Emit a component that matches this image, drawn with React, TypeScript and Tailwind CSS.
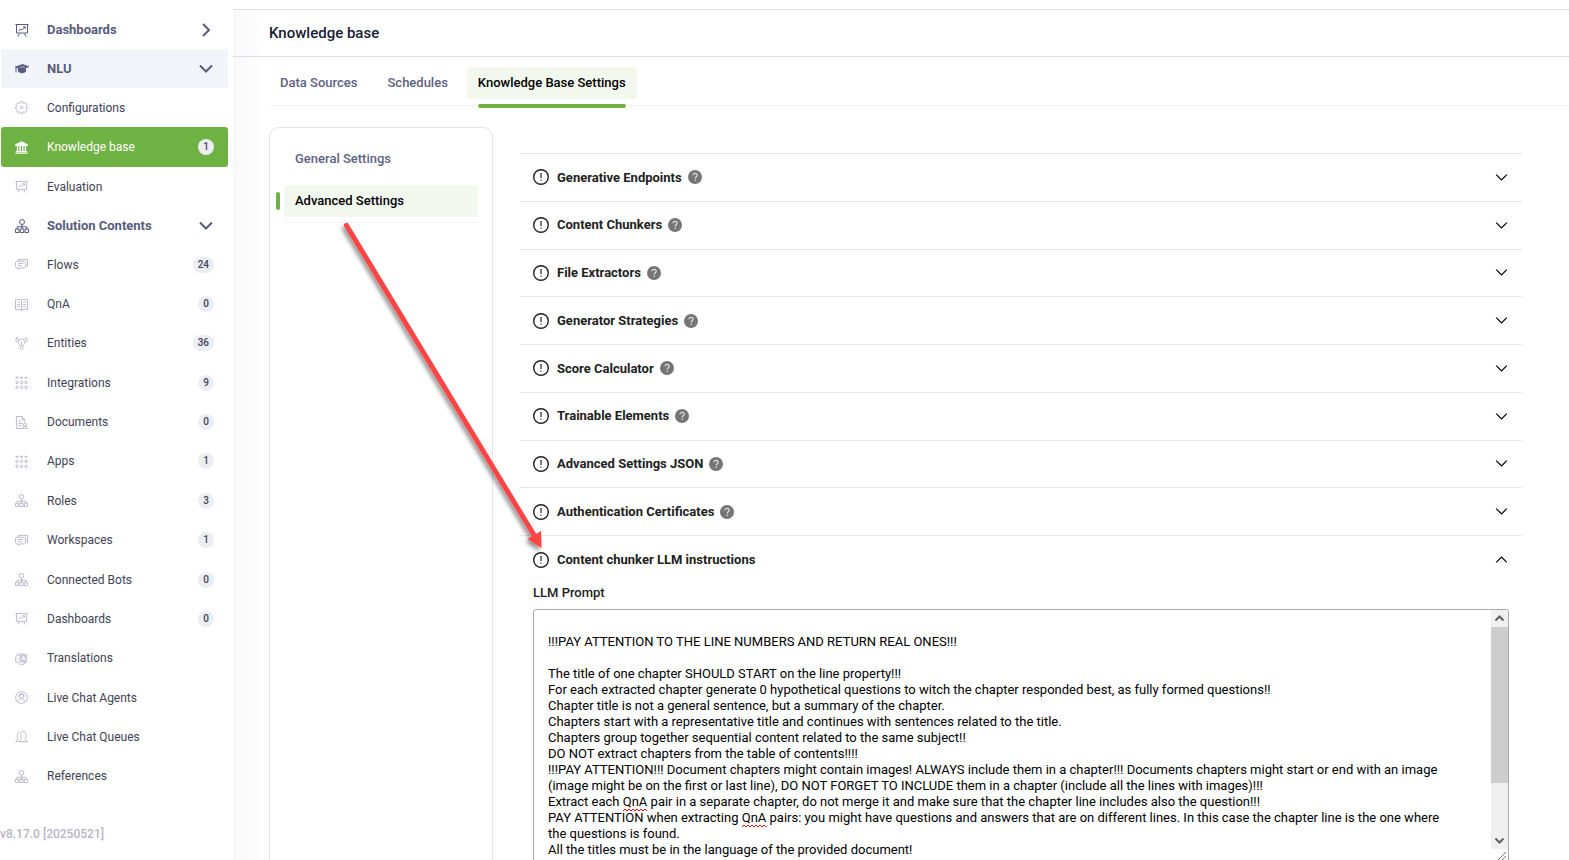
import React, { useState } from 'react';
import { BsChevronDown, BsChevronUp } from 'react-icons/bs';

type IconName = 'board' | 'cap' | 'gear' | 'bank' | 'tree' | 'chat' | 'book' | 'nodes' | 'dots' | 'doc' | 'lang' | 'agent' | 'queue';

interface NavItem {
   label: string;
   icon: IconName;
   count?: number;
}

const NLU_ITEMS: NavItem[] = [
   { label: 'Configurations', icon: 'gear' },
   { label: 'Knowledge base', icon: 'bank', count: 1 },
   { label: 'Evaluation', icon: 'board' },
];

const SOLUTION_ITEMS: NavItem[] = [
   { label: 'Flows', icon: 'chat', count: 24 },
   { label: 'QnA', icon: 'book', count: 0 },
   { label: 'Entities', icon: 'nodes', count: 36 },
   { label: 'Integrations', icon: 'dots', count: 9 },
   { label: 'Documents', icon: 'doc', count: 0 },
   { label: 'Apps', icon: 'dots', count: 1 },
   { label: 'Roles', icon: 'tree', count: 3 },
   { label: 'Workspaces', icon: 'chat', count: 1 },
   { label: 'Connected Bots', icon: 'tree', count: 0 },
   { label: 'Dashboards', icon: 'board', count: 0 },
   { label: 'Translations', icon: 'lang' },
   { label: 'Live Chat Agents', icon: 'agent' },
   { label: 'Live Chat Queues', icon: 'queue' },
   { label: 'References', icon: 'tree' },
];

const SECTIONS = [
   'Generative Endpoints',
   'Content Chunkers',
   'File Extractors',
   'Generator Strategies',
   'Score Calculator',
   'Trainable Elements',
   'Advanced Settings JSON',
   'Authentication Certificates',
];

const PROMPT = `
!!!PAY ATTENTION TO THE LINE NUMBERS AND RETURN REAL ONES!!!

The title of one chapter SHOULD START on the line property!!!
For each extracted chapter generate 0 hypothetical questions to witch the chapter responded best, as fully formed questions!!
Chapter title is not a general sentence, but a summary of the chapter.
Chapters start with a representative title and continues with sentences related to the title.
Chapters group together sequential content related to the same subject!!
DO NOT extract chapters from the table of contents!!!!
!!!PAY ATTENTION!!! Document chapters might contain images! ALWAYS include them in a chapter!!! Documents chapters might start or end with an image (image might be on the first or last line), DO NOT FORGET TO INCLUDE them in a chapter (include all the lines with images)!!!
Extract each QnA pair in a separate chapter, do not merge it and make sure that the chapter line includes also the question!!!
PAY ATTENTION when extracting QnA pairs: you might have questions and answers that are on different lines. In this case the chapter line is the one where the questions is found.
All the titles must be in the language of the provided document!`;

const SHAPES: Record<IconName, React.ReactNode> = {
   board: (
      <>
         <path d="M0.5 1.5h13M1.5 1.5v8.5h11v-8.5M4.5 10.5l-1.5 3M9.5 10.5l1.5 3" />
         <path d="M3.5 8l2-2 1.5 1 3-3M8 3.8h2.2V6" />
      </>
   ),
   cap: (
      <>
         <path d="M0.5 5L7.5 2.5 13.5 4.8 7 7.2z" fill="currentColor" />
         <path d="M3.5 6v3.5c2 1.8 5 1.8 7 0V6L7 7.5z" fill="currentColor" />
         <path d="M1 5v5.5" />
         <path d="M4.5 5.6c1.5-1.2 4.500-1 5.500 0.600" stroke="#f1f5f9" strokeWidth="0.6" />
      </>
   ),
   gear: (
      <>
         <circle cx="7" cy="7" r="1.3" />
         <path d="M5.8 0.7h2.4l0.400 1.700 1 0.400 1.500-0.900 1.700 1.700-0.900 1.500 0.400 1 1.200 0.300v1.400l-1.200 0.400-0.400 1 0.900 1.500-1.700 1.700-1.500-0.900-1 0.400-0.400 1.400H5.800l-0.400-1.400-1-0.400-1.500 0.900-1.700-1.700 0.900-1.500-0.400-1-1.200-0.400V6.400l1.200-0.300 0.400-1-0.900-1.500 1.700-1.700 1.500 0.900 1-0.400z" />
      </>
   ),
   bank: (
      <>
         <path d="M0.5 4L7 0.8 13.5 4v0.8h-13z" fill="currentColor" />
         <path d="M2.8 5.5v5.5M5.6 5.5v5.5M8.4 5.5v5.5M11.2 5.5v5.5" strokeWidth="1.5" />
         <path d="M1 11.5h12M0.3 13.2h13.4" strokeWidth="1.2" />
      </>
   ),
   tree: (
      <>
         <circle cx="7" cy="3" r="2.5" />
         <path d="M7 5.5v4.5M2.2 10V7.8h9.6V10M0.5 10h3.5v3.5H0.5zM5.2 10h3.6v3.5H5.2zM10 10h3.5v3.5H10z" />
      </>
   ),
   chat: (
      <>
         <path d="M3.5 3V1.5h10v7.2l-2 0.6" />
         <path d="M2.5 3.5h7.2c1 0 1.8 0.6 1.8 1.6v4c0 1-0.8 1.6-1.8 1.6H5.5L3.5 12.5v-1.8H2.3c-1 0-1.8-0.6-1.8-1.6v-4c0-1 0.8-1.6 2-1.6zM3.3 6h5.5M3.3 8.3h4" />
      </>
   ),
   book: (
      <>
         <path d="M7 2.5C5.5 1.3 2.8 1.3 0.5 1.7v10.8c2.5-0.4 5-0.3 6.5 0.8 1.5-1.1 4-1.2 6.5-0.8V1.7C11.2 1.3 8.5 1.3 7 2.5zM7 2.5v10.8" />
         <path d="M2.5 4.5h2.8M2.5 7h2.8M2.5 9.5h2.8M8.7 4.5h2.8M8.7 7h2.8M8.7 9.5h2.8" />
      </>
   ),
   nodes: (
      <>
         <circle cx="2.5" cy="3.5" r="1.7" />
         <circle cx="11.5" cy="3.5" r="1.7" />
         <circle cx="7" cy="11.5" r="1.8" />
         <path d="M4.5 3.5l1.5-1.3h2l1.5 1.3M3 5.5l2.5 4.3M11 5.5L8.5 9.8M7 5v4M0.8 1h2M11.2 1h2" />
      </>
   ),
   dots: (
      <>
         <path d="M0.5 1.5h3.2M5.4 1.5h3.2M10.3 1.5h3.2M2.1 0.8v2.7M7 0.8v2.7M11.9 0.8v2.7" />
         <circle cx="2.1" cy="7" r="1.3" />
         <circle cx="7" cy="7" r="1.3" />
         <circle cx="11.9" cy="7" r="1.3" />
         <circle cx="2.1" cy="12.2" r="1.3" />
         <circle cx="7" cy="12.2" r="1.3" />
         <circle cx="11.9" cy="12.2" r="1.3" />
      </>
   ),
   doc: (
      <>
         <path d="M10.5 6.5V4L7.5 0.5h-6v13h7M7.5 0.5V4h3M3.5 5.5h3M3.5 8h5M3.5 10.5h3.5" />
         <circle cx="10.7" cy="9.5" r="1.6" />
         <path d="M8 13.5c0-1.6 1-2.3 2.7-2.3s2.7 0.7 2.7 2.3z" />
      </>
   ),
   lang: (
      <>
         <path d="M5.5 1.8l7 1v8.7l-7-1z" fill="currentColor" opacity="0.75" />
         <path d="M4.5 1.2C2 2 0.8 4 0.8 6.5v4.3h4M3 4h2M3 7.5h2M4 12.5c2 1.3 5 1.2 7-0.5" />
         <path d="M7.3 8.8L9.2 4.5 11 9.300M8 7.500h2.4" stroke="#ffffff" />
      </>
   ),
   agent: (
      <>
         <circle cx="7" cy="7" r="6.3" />
         <circle cx="7" cy="5.5" r="2.3" />
         <path d="M3 11.5c0.5-2.2 2-3.2 4-3.2s3.5 1 4 3.2M3.8 6c0-4 6.4-4 6.4 0" />
      </>
   ),
   queue: (
      <>
         <path d="M0.5 12.5h13M5 12c0.3-1.5 2-1.5 2-3C5.5 7.5 5.5 1.5 9 1.5s3.5 6 1.8 7.5c0 1.5 2 1.5 2.5 3.3" />
         <path d="M1.2 12c0-1.8 2-1.5 2-3C1.7 7 2 2.2 5.2 2.2" />
      </>
   ),
};

const NavIcon: React.FC<{ name: IconName; className?: string }> = ({ name, className }) => (
   <svg viewBox="0 0 14 14" fill="none" stroke="currentColor" className={className} aria-hidden="true">
      {SHAPES[name]}
   </svg>
);

const GroupHeader: React.FC<{ label: string; icon: IconName; open?: boolean; tinted?: boolean }> = ({ label, icon, open, tinted }) => (
   <button
      className={`h-[39px] w-full flex items-center pl-[14px] pr-[15px] text-[13px] font-bold text-[#575b7d] cursor-pointer ${tinted ? 'bg-[#f1f5f9]' : ''}`}
   >
      <NavIcon name={icon} className="size-[14px] mr-[18px]" />
      <span className="flex-1 text-left">{label}</span>
      <svg viewBox="0 0 14 14" fill="none" stroke="currentColor" strokeWidth="2" className="size-[14px]" aria-hidden="true">
         {open ? <path d="M1 3.500l6 6 6-6" /> : <path d="M4 1l6 6-6 6" />}
      </svg>
   </button>
);

const NavLink: React.FC<{ item: NavItem; active?: boolean }> = ({ item, active }) => (
   <a
      href="#"
      className={`h-full flex items-center pl-[14px] pr-[14px] text-[12px] ${active ? 'bg-[#6fb244] text-white rounded-[3px]' : 'text-[#3f4254]'}`}
   >
      <NavIcon name={item.icon} className={`size-[13px] mr-[19px] ${active ? 'text-white' : 'text-[#b5b5c8]'}`} />
      <span className="flex-1">{item.label}</span>
      {item.count !== undefined && (
         <span className="h-4 min-w-4 px-[5px] rounded-full bg-[#ebedf3] text-[#3f4254] text-[10px] leading-4 font-medium text-center">
            {item.count}
         </span>
      )}
   </a>
);

const Sidebar: React.FC = () => (
   <aside className="w-[233px] shrink-0 pt-[10px] pl-px pr-[5px] bg-white">
      <nav>
         <GroupHeader label="Dashboards" icon="board" />
         <GroupHeader label="NLU" icon="cap" open tinted />
         <ul>
            {NLU_ITEMS.map((item) => {
               const active = item.label === 'Knowledge base';
               return (
                  <li key={item.label} className={active ? 'h-10' : 'h-[39px]'}>
                     <NavLink item={item} active={active} />
                  </li>
               );
            })}
         </ul>
         <GroupHeader label="Solution Contents" icon="tree" open />
         <ul className="grid auto-rows-fr h-[551px]">
            {SOLUTION_ITEMS.map((item) => (
               <li key={item.label}>
                  <NavLink item={item} />
               </li>
            ))}
         </ul>
      </nav>
      <p className="mt-7 -ml-px text-[12px] leading-5 font-medium text-[#b5b5c3]">v8.17.0 [20250521]</p>
   </aside>
);

const Tabs: React.FC = () => (
   <nav className="ml-9 mt-[10px] h-[39px] flex items-start gap-2 border-b border-[#f3f4f6] text-[13px] font-medium">
      <a href="#" className="h-8 px-[11px] flex items-center text-[#5e6282]">Data Sources</a>
      <a href="#" className="h-8 px-[11px] flex items-center text-[#5e6282]">Schedules</a>
      <a href="#" className="relative h-8 px-[11px] flex items-center rounded bg-[#f3f8ef] text-black">
         Knowledge Base Settings
         <span className="absolute left-[11px] right-[11px] top-[37px] h-1 rounded-sm bg-[#6fb244]" />
      </a>
   </nav>
);

const SettingsMenu: React.FC = () => (
   <div className="w-56 shrink-0 h-[860px] pt-[15px] px-[14px] border border-[#e1e3ee] rounded-[10px] text-[13px] font-medium">
      <a href="#" className="h-8 px-[11px] flex items-center text-[#5e6282]">General Settings</a>
      <div className="mt-[10px] pb-[5px] border-b border-[#f3f4f6]">
         <a href="#" className="relative h-8 px-[11px] flex items-center rounded bg-[#f3f8ef] text-black">
            Advanced Settings
            <span className="absolute -left-2 top-[7px] w-1 h-[18px] rounded-sm bg-[#6fb244]" />
         </a>
      </div>
   </div>
);

const AlertIcon: React.FC = () => (
   <svg viewBox="0 0 16 16" fill="none" stroke="currentColor" className="size-4" aria-hidden="true">
      <circle cx="8" cy="8" r="7.300" strokeWidth="1.400" />
      <path d="M8 4v5M8 10.500v1.300" strokeWidth="1.200" />
   </svg>
);

const HintIcon: React.FC = () => (
   <svg viewBox="0 0 14 14" fill="none" className="size-[14px] ml-[6px]" aria-hidden="true">
      <circle cx="7" cy="7" r="7" fill="#757575" />
      <path d="M5 5.300c0-2.600 4.200-2.500 4.200 0C9.200 6.800 7.200 6.800 7.200 8.500M7.200 9.600v1.300" stroke="#e4e4e4" strokeWidth="1.100" />
   </svg>
);

const SectionRow: React.FC<{ label: string; open?: boolean; hint?: boolean }> = ({ label, open, hint }) => (
   <button className="w-full flex items-center pl-[13px] pr-[14px] border-t border-[#e4e6ef] text-[13px] font-bold text-[#212121] cursor-pointer">
      <AlertIcon />
      <span className="ml-2">{label}</span>
      {hint && <HintIcon />}
      <span className="ml-auto">{open ? <BsChevronUp size={13} strokeWidth={1} /> : <BsChevronDown size={13} strokeWidth={1} />}</span>
   </button>
);

// Spell checker underline
const Squiggle: React.FC<{ className: string }> = ({ className }) => (
   <svg viewBox="0 0 26 4" fill="none" stroke="#ff0000" className={`absolute w-[26px] h-1 ${className}`} aria-hidden="true">
      <path d="M0 3l2-2 2 2 2-2 2 2 2-2 2 2 2-2 2 2 2-2 2 2 2-2 2 2" />
   </svg>
);

const PromptEditor: React.FC = () => {
   const [value, setValue] = useState(PROMPT);

   return (
      <div className="px-[13px]">
         <label htmlFor="llm-prompt" className="block text-[13px] leading-5 font-medium text-[#212121]">LLM Prompt</label>
         <div className="relative mt-[6px] h-[255px] flex border border-[#a9a9a9] rounded-[3px] overflow-hidden">
            <textarea
               id="llm-prompt"
               value={value}
               onChange={(e) => setValue(e.target.value)}
               spellCheck={false}
               className="flex-1 pl-[14px] pr-10 py-2 resize-none overflow-hidden outline-none text-[13px] leading-4 text-black"
            />
            <div className="w-[17px] flex flex-col bg-[#f0f0f0] text-[#606060]" aria-hidden="true">
               <svg viewBox="0 0 17 17" fill="none" stroke="currentColor" strokeWidth="2" className="size-[17px]">
                  <path d="M4.5 10.5l4-4 4 4" />
               </svg>
               <div className="h-[156px] bg-[#cdcdcd]" />
               <svg viewBox="0 0 17 17" fill="none" stroke="currentColor" strokeWidth="2" className="size-[17px] mt-auto">
                  <path d="M4.5 6.5l4 4 4-4" />
               </svg>
               <svg viewBox="0 0 17 14" fill="none" stroke="#777777" className="w-[17px] h-[14px] bg-white">
                  <path d="M6 12l9-9M10 12l5-5M14 12l1-1" />
               </svg>
            </div>
            <Squiggle className="left-[89px] top-[198px]" />
            <Squiggle className="left-[208px] top-[214px]" />
         </div>
      </div>
   );
};

const Arrow: React.FC = () => (
   <svg viewBox="0 0 220 350" className="absolute left-[336px] top-[215px] w-[220px] h-[350px] pointer-events-none" aria-hidden="true">
      <defs>
         <filter id="arrow-shadow" x="-20%" y="-20%" width="140%" height="140%">
            <feDropShadow dx="-2" dy="3" stdDeviation="2" floodColor="#000000" floodOpacity="0.45" />
         </filter>
      </defs>
      <g filter="url(#arrow-shadow)">
         <path d="M10.5 10.5L198 320" stroke="#fb4444" strokeWidth="5" strokeLinecap="round" />
         <path d="M205.500 333L191.500 324 205 316z" fill="#fb4444" />
      </g>
   </svg>
);

export default function App() {
   return (
      <div className="relative h-screen flex overflow-hidden bg-white font-[Roboto,sans-serif]">
         <Sidebar />
         <main className="flex-1 min-w-0 pt-[9px]">
            <div className="min-h-full bg-linear-to-r from-[#f8f8f8] to-white to-[30px]">
               <header className="h-12 pl-9 flex items-center border-y border-[#dcdee9]">
                  <h1 className="text-[15px] font-medium text-[#181c32]">Knowledge base</h1>
               </header>
               <Tabs />
               <div className="pl-9 pr-[47px] pt-[21px] flex items-start gap-[27px]">
                  <SettingsMenu />
                  <section className="flex-1 min-w-0 pt-[26px]">
                     <div className="grid auto-rows-fr h-[382px]">
                        {SECTIONS.map((label) => (
                           <SectionRow key={label} label={label} hint />
                        ))}
                     </div>
                     <div className="grid h-12">
                        <SectionRow label="Content chunker LLM instructions" open />
                     </div>
                     <PromptEditor />
                  </section>
               </div>
            </div>
         </main>
         <Arrow />
      </div>
   );
}
